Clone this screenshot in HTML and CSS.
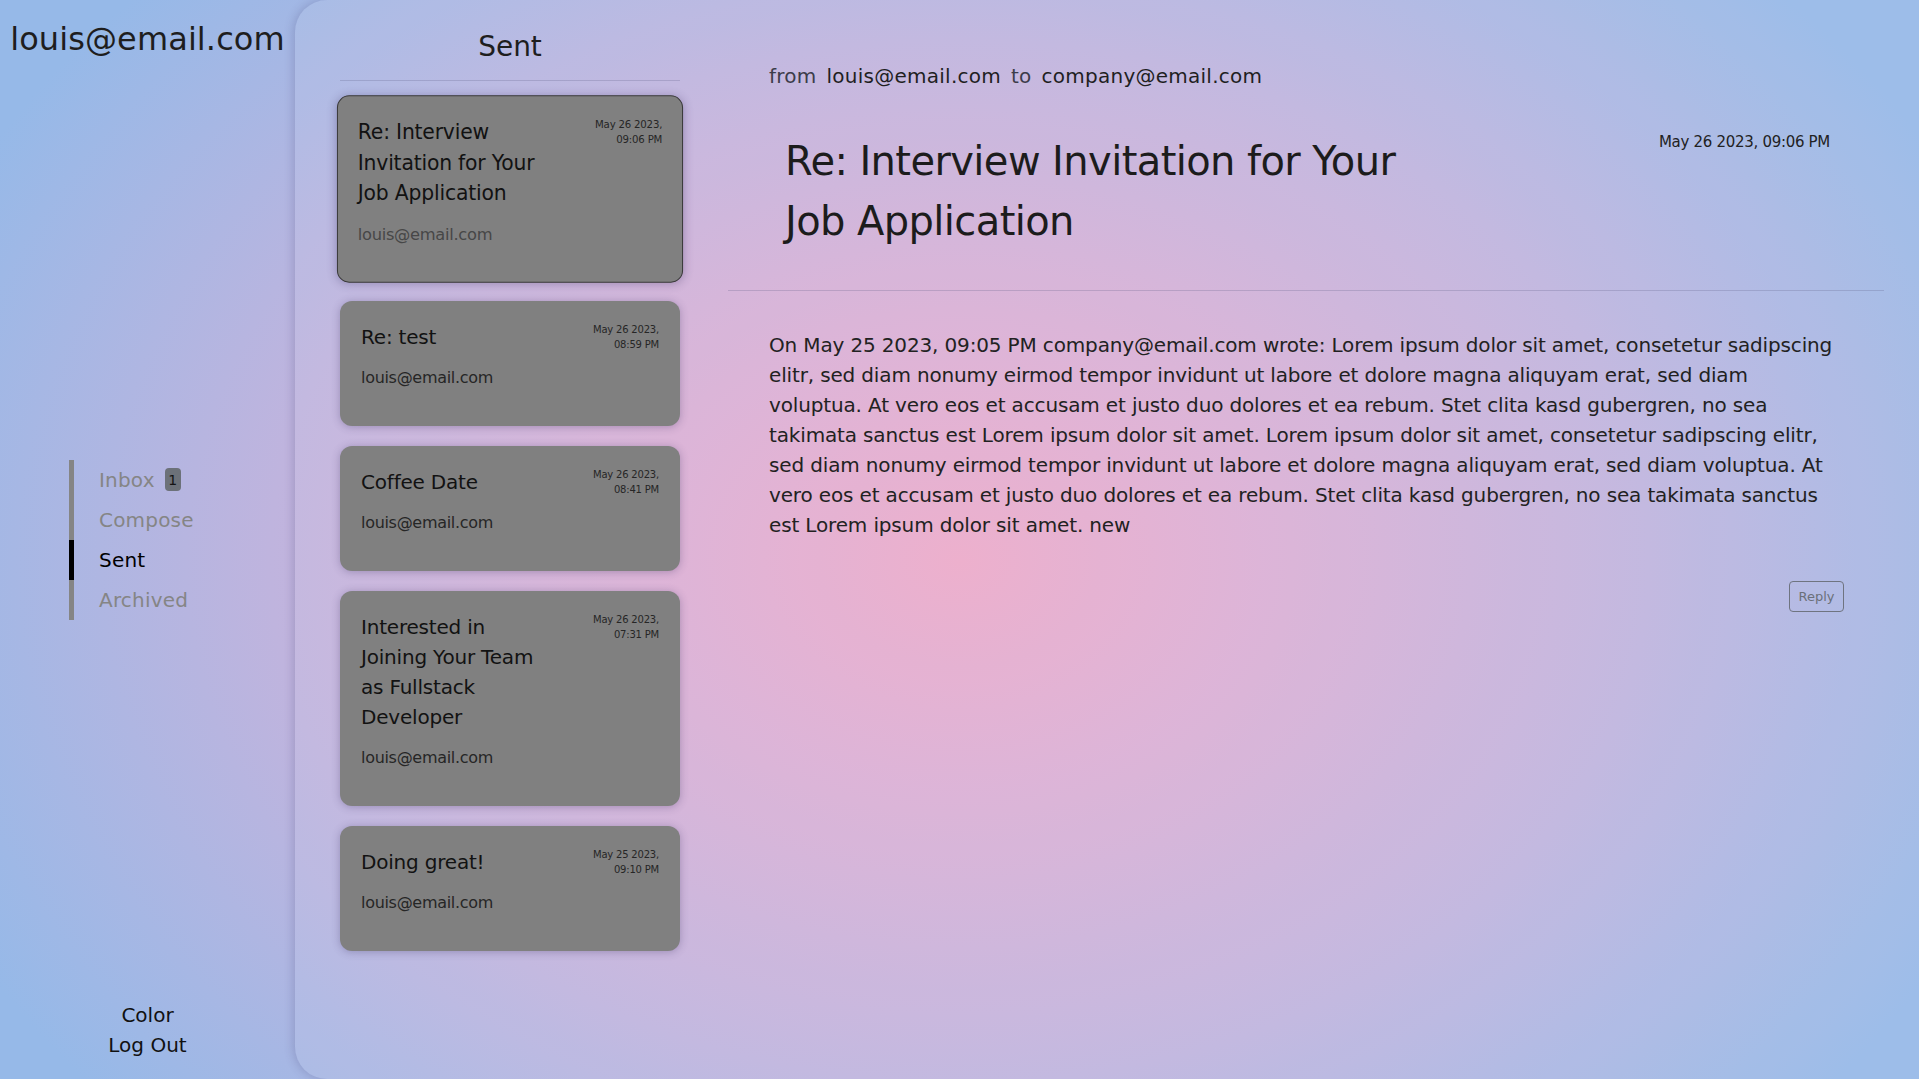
FILE: index.html
```html
<!DOCTYPE html>
<html lang="en">
<head>
<meta charset="utf-8">
<title>Sent</title>
<link rel="stylesheet" href="styles.css">
</head>
<body>
<div class="app">
  <aside class="sidebar">
    <div class="account">louis@email.com</div>
    <nav class="nav">
      <a class="nav-item">Inbox <span class="badge">1</span></a>
      <a class="nav-item">Compose</a>
      <a class="nav-item active">Sent</a>
      <a class="nav-item">Archived</a>
    </nav>
    <div class="footer-links">
      <a>Color</a>
      <a>Log Out</a>
    </div>
  </aside>
  <main class="panel">
    <section class="list">
      <h2 class="list-title">Sent</h2>
      <div class="cards">
        <div class="card selected">
          <div class="card-head">
            <div class="card-title">Re: Interview Invitation for Your Job Application</div>
            <div class="card-date">May 26 2023,<br>09:06 PM</div>
          </div>
          <div class="card-from">louis@email.com</div>
        </div>
        <div class="card">
          <div class="card-head">
            <div class="card-title">Re: test</div>
            <div class="card-date">May 26 2023,<br>08:59 PM</div>
          </div>
          <div class="card-from">louis@email.com</div>
        </div>
        <div class="card">
          <div class="card-head">
            <div class="card-title">Coffee Date</div>
            <div class="card-date">May 26 2023,<br>08:41 PM</div>
          </div>
          <div class="card-from">louis@email.com</div>
        </div>
        <div class="card">
          <div class="card-head">
            <div class="card-title">Interested in Joining Your Team as Fullstack Developer</div>
            <div class="card-date">May 26 2023,<br>07:31 PM</div>
          </div>
          <div class="card-from">louis@email.com</div>
        </div>
        <div class="card">
          <div class="card-head">
            <div class="card-title">Doing great!</div>
            <div class="card-date">May 25 2023,<br>09:10 PM</div>
          </div>
          <div class="card-from">louis@email.com</div>
        </div>
      </div>
    </section>
    <section class="detail">
      <div class="meta">
        <span class="muted">from</span>
        <span>louis@email.com</span>
        <span class="muted">to</span>
        <span>company@email.com</span>
      </div>
      <div class="subject-row">
        <h1 class="subject">Re: Interview Invitation for Your Job Application</h1>
        <div class="detail-date">May 26 2023, 09:06 PM</div>
      </div>
      <p class="body-text">On May 25 2023, 09:05 PM company@email.com wrote: Lorem ipsum dolor sit amet, consetetur sadipscing elitr, sed diam nonumy eirmod tempor invidunt ut labore et dolore magna aliquyam erat, sed diam voluptua. At vero eos et accusam et justo duo dolores et ea rebum. Stet clita kasd gubergren, no sea takimata sanctus est Lorem ipsum dolor sit amet. Lorem ipsum dolor sit amet, consetetur sadipscing elitr, sed diam nonumy eirmod tempor invidunt ut labore et dolore magna aliquyam erat, sed diam voluptua. At vero eos et accusam et justo duo dolores et ea rebum. Stet clita kasd gubergren, no sea takimata sanctus est Lorem ipsum dolor sit amet. new</p>
      <div class="actions">
        <button class="reply">Reply</button>
      </div>
    </section>
  </main>
</div>
</body>
</html>
```

FILE: styles.css
```css
* { box-sizing: border-box; }

html, body {
  margin: 0;
  height: 100%;
}

body {
  font-family: "DejaVu Sans", "Noto Sans", sans-serif;
  color: #1c1c1c;
  background: radial-gradient(ellipse 58% 78% at 50% 52%, #ecabca 0%, #d9b0d6 30%, #bfb4de 62%, #96b9e8 100%);
  overflow: hidden;
}

.app {
  display: flex;
  height: 100vh;
}

/* ---------- Sidebar ---------- */
.sidebar {
  width: 295px;
  flex: none;
  display: grid;
  grid-template-rows: 1fr auto 1fr;
  height: 100%;
}

.account {
  align-self: start;
  justify-self: center;
  margin-top: 15px;
  font-size: 32px;
  line-height: 48px;
  color: #1e1e1e;
  white-space: nowrap;
  letter-spacing: 0.1px;
}

.nav {
  display: flex;
  flex-direction: column;
  margin-left: 69px;
}

.nav-item {
  display: flex;
  align-items: center;
  height: 40px;
  padding-left: 25px;
  border-left: 5px solid #858585;
  font-size: 20px;
  color: #858585;
  letter-spacing: 0.2px;
  cursor: pointer;
}

.nav-item.active {
  border-left-color: #000;
  color: #000;
}

.badge {
  display: inline-flex;
  align-items: center;
  justify-content: center;
  width: 16px;
  height: 23px;
  margin-left: 10px;
  border-radius: 4px;
  background: #6c7179;
  color: #141414;
  font-size: 14px;
}

.footer-links {
  align-self: end;
  justify-self: center;
  display: flex;
  flex-direction: column;
  align-items: center;
  padding-bottom: 19px;
  font-size: 20px;
  line-height: 30px;
  color: #111;
}

/* ---------- Panel ---------- */
.panel {
  flex: 1;
  display: flex;
  height: 100%;
  border-radius: 32px 0 0 32px;
  background: rgba(255, 255, 255, 0.07);
  box-shadow: -2px 0 10px rgba(60, 60, 110, 0.22);
}

.list {
  width: 433px;
  flex: none;
  padding-left: 45px;
  padding-right: 48px;
}

.list-title {
  margin: 0;
  padding: 26px 0 12px;
  font-size: 28px;
  line-height: 42px;
  font-weight: 400;
  text-align: center;
  color: #1e1e1e;
  border-bottom: 1px solid rgba(90, 90, 130, 0.25);
}

.cards {
  display: flex;
  flex-direction: column;
  gap: 20px;
  padding-top: 16px;
}

.card {
  background: #808080;
  border-radius: 12px;
  padding: 21px;
  box-shadow: 0 1px 9px rgba(50, 40, 90, 0.3);
}

.card.selected {
  transform: scale(1.018);
  border: 1.5px solid #3a3a3a;
  padding: 19.5px;
}

.card-head {
  display: flex;
  justify-content: space-between;
  align-items: flex-start;
}

.card-title {
  max-width: 196px;
  font-size: 20px;
  line-height: 30px;
  color: #121212;
  letter-spacing: -0.2px;
}

.card-date {
  font-size: 10px;
  line-height: 15px;
  text-align: right;
  color: #262626;
  white-space: nowrap;
  letter-spacing: -0.2px;
}

.card-from {
  margin-top: 14px;
  margin-bottom: 15px;
  font-size: 16px;
  line-height: 24px;
  color: #262626;
  letter-spacing: -0.3px;
}

.card.selected .card-from {
  color: #474747;
}

/* ---------- Detail ---------- */
.detail {
  width: 1156px;
  flex: none;
}

.meta {
  display: flex;
  gap: 10px;
  padding: 61px 0 0 41px;
  font-size: 20px;
  line-height: 30px;
  color: #1f1f1f;
  letter-spacing: 0.25px;
}

.meta .muted {
  color: #3c3c4a;
}

.subject-row {
  display: flex;
  justify-content: space-between;
  align-items: flex-start;
  padding: 40px 54px 39px 57px;
  border-bottom: 1px solid rgba(90, 90, 130, 0.25);
}

.subject {
  margin: 0;
  max-width: 630px;
  font-size: 40px;
  line-height: 60px;
  font-weight: 400;
  color: #1c1c1c;
  letter-spacing: -0.6px;
}

.detail-date {
  margin-top: -1px;
  font-size: 15px;
  line-height: 24px;
  color: #222;
  letter-spacing: -0.3px;
}

.body-text {
  margin: 0;
  padding: 39px 44px 0 41px;
  font-size: 20px;
  line-height: 30px;
  color: #222;
  letter-spacing: -0.15px;
}

.actions {
  display: flex;
  justify-content: flex-end;
  padding: 41px 40px 0 0;
}

.reply {
  width: 55px;
  height: 31px;
  padding: 0;
  border: 1px solid #6f7480;
  border-radius: 4px;
  background: transparent;
  color: #6b707a;
  font-family: inherit;
  font-size: 13px;
  cursor: pointer;
}
```
